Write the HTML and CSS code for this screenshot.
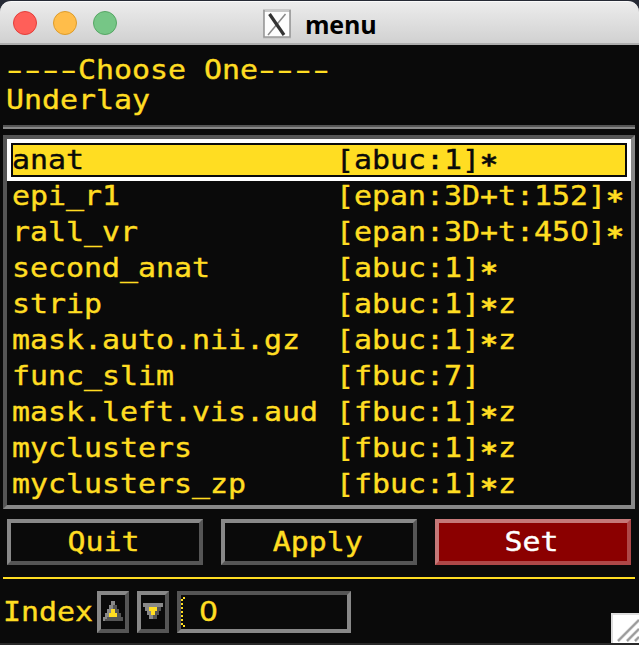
FILE: index.html
```html
<!DOCTYPE html>
<html lang="en">
<head>
<meta charset="utf-8">
<title>menu</title>
<link rel="stylesheet" href="styles.css">
</head>
<body>
<div class="window">
  <header class="titlebar">
    <div class="lights"><i class="light close"></i><i class="light minimize"></i><i class="light zoom"></i></div>
    <div class="title">
      <svg class="xicon" width="28" height="30" viewBox="0 0 28 30">
        <rect x="0" y="0" width="28" height="30" fill="#c9c9c9"/>
        <rect x="1" y="3" width="26" height="25" fill="#fdfdfd"/>
        <path d="M1 1V28H27V1" fill="none" stroke="#999" stroke-width="1.6"/>
        <path d="M22.500 5L5 26" stroke="#888" stroke-width="1.500"/>
        <path d="M6.500 5L21 26" stroke="#333" stroke-width="3.200"/>
      </svg>
      <span>menu</span>
    </div>
  </header>
  <main class="panel">
    <div class="prompt"><div><span class="wide"><span class="dashes">----</span>Choose One<span class="dashes">----</span></span></div><div><span class="wide">Underlay</span></div></div>
    <div class="separator"></div>
    <div class="list">
      <div class="item selected"><span class="wide">anat              [abuc:1]<b class="star">*</b></span></div>
      <div class="item"><span class="wide">epi_r1            [epan:3D+t:152]<b class="star">*</b></span></div>
      <div class="item"><span class="wide">rall_vr           [epan:3D+t:45<span class="zero">0</span>]<b class="star">*</b></span></div>
      <div class="item"><span class="wide">second_anat       [abuc:1]<b class="star">*</b></span></div>
      <div class="item"><span class="wide">strip             [abuc:1]<b class="star">*</b>z</span></div>
      <div class="item"><span class="wide">mask.auto.nii.gz  [abuc:1]<b class="star">*</b>z</span></div>
      <div class="item"><span class="wide">func_slim         [fbuc:7]</span></div>
      <div class="item"><span class="wide">mask.left.vis.aud [fbuc:1]<b class="star">*</b>z</span></div>
      <div class="item"><span class="wide">myclusters        [fbuc:1]<b class="star">*</b>z</span></div>
      <div class="item"><span class="wide">myclusters_zp     [fbuc:1]<b class="star">*</b>z</span></div>
    </div>
    <div class="buttons">
      <div class="button"><span class="wide">Quit</span></div>
      <div class="button"><span class="wide">Apply</span></div>
      <div class="button set"><span class="wide">Set</span></div>
    </div>
    <div class="rule"></div>
    <div class="index">
      <span class="label"><span class="wide">Index</span></span>
      <div class="arrow">
        <svg width="24" height="34" viewBox="0 0 24 34" shape-rendering="crispEdges">
          <path d="M10 6h4v4h2v4h2v4h2v4h2v4H2v-4h2v-4h2v-4h2v-4h2z" fill="#555"/>
          <path d="M10 6h4v4h-2v4h-2v4H8v4H6v2H4v2H2v-4h2v-4h2v-4h2v-4h2z" fill="#888"/>
          <path d="M10 14h4v4h2v4H8v-4h2z" fill="#ffdd22"/>
        </svg>
      </div>
      <div class="arrow">
        <svg width="24" height="34" viewBox="0 0 24 34" shape-rendering="crispEdges">
          <path d="M2 8h20v4h-2v4h-2v4h-2v4H8v-4H6v-4H4v-4H2z" fill="#555"/>
          <path d="M2 8h20v4H8v4h2v4h2v4H8v-4H6v-4H4v-4H2z" fill="#888"/>
          <path d="M8 12h8v4h-2v4h-4v-4H8z" fill="#ffdd22"/>
        </svg>
      </div>
      <div class="field">
        <svg width="4" height="30" viewBox="0 0 4 30" shape-rendering="crispEdges">
          <path d="M2 0h2v2H2zM0 2h2v2H0zM0 6h2v2H0zM0 10h2v2H0zM0 14h2v2H0zM0 18h2v2H0zM0 22h2v2H0zM0 26h2v2H0zM2 28h2v2H2z" fill="#ffdd22"/>
        </svg>
        <span class="wide"><span class="zero">0</span></span>
      </div>
    </div>
  </main>
  <svg class="grip" width="28" height="30" viewBox="0 0 28 30">
    <path d="M0 0H28V30H0z" fill="#ddd"/>
    <path d="M2 2H28V30H2z" fill="#fff"/>
    <path d="M7 28L28 7M16 28L28 16M24 28L28 24" stroke="#ddd" stroke-width="3.500"/>
    <path d="M7 28L28 7M16 28L28 16M24 28L28 24" stroke="#999" stroke-width="1.800"/>
  </svg>
</div>
</body>
</html>
```
FILE: styles.css
```css
* { box-sizing: border-box; }
body { margin: 0; background: #262a35; overflow: hidden; }
.window {
  position: relative;
  width: 639px;
  height: 645px;
  padding-top: 1px;
}
.titlebar {
  position: relative;
  height: 44px;
  padding: 10px 13px;
  background: linear-gradient(#ececec, #d1d1d1);
  border-top: 1px solid #fafafa;
  border-bottom: 2px solid #aeaeae;
  border-radius: 11px 11px 0 0;
}
.lights { display: flex; gap: 16px; margin-top: -1px; }
.light { width: 24px; height: 24px; border-radius: 50%; border: 1px solid; }
.close { background: #ff5f59; border-color: #e33e3a; }
.minimize { background: #ffbd4a; border-color: #dd9c2b; }
.zoom { background: #76c686; border-color: #56a664; }
.title {
  position: absolute;
  left: 263px;
  top: 7px;
  display: flex;
  align-items: center;
  gap: 14px;
  font: bold 25px/30px "Open Sans", sans-serif;
  letter-spacing: -0.200px;
  color: #000;
}
.panel {
  height: 600px;
  padding: 10px 4px 0 3px;
  background: #0a0a0a;
  border-bottom: 2px solid #292929;
  color: #ffdd22;
  font: 27px/30px "DejaVu Sans Mono", monospace;
  -webkit-text-stroke: 0.4px currentColor;
}
/* stretches the 16.255px character cell to 18px */
.wide {
  display: inline-block;
  vertical-align: top;
  transform: scaleX(1.1073);
  transform-origin: 0 50%;
}
.prompt { height: 70px; padding-left: 3px; white-space: pre; }
.dashes {
  display: inline-block;
  width: 65.020px;
  height: 30px;
  vertical-align: top;
  letter-spacing: -6.095px;
  text-indent: -3.300px;
  transform: scaleX(1.6);
  transform-origin: 0 50%;
  -webkit-text-stroke: 0;
}
.separator { height: 4px; border-top: 2px solid #555; border-bottom: 2px solid #888; }
.list {
  height: 374px;
  margin-top: 6px;
  border: 4px solid;
  border-color: #555 #888 #888 #555;
}
.item { height: 36px; padding-left: 5px; line-height: 30px; white-space: pre; }
.selected {
  height: 42px;
  padding-left: 1px;
  border: 4px solid #fff;
  background: #ffdd22;
  box-shadow: inset 0 0 0 2px #0a0a0a;
  color: #0a0a0a;
  line-height: 34px;
}
.star { display: inline-block; height: 30px; vertical-align: top; line-height: 40px; }
.selected .star { line-height: 44px; }
.zero { font-family: "DejaVu Sans", sans-serif; letter-spacing: -0.920px; }
.buttons { display: flex; gap: 18px; padding: 10px 4px 12px; }
.button {
  width: 196px;
  height: 46px;
  border: 4px solid;
  border-color: #888 #555 #555 #888;
  line-height: 37px;
  text-align: center;
}
.button .wide { margin-left: -3px; transform-origin: 50% 50%; }
.set { color: #fff; background: #8b0000; border-color: #c57878 #ae4848 #ae4848 #c57878; }
.rule { height: 2px; background: #ffdd22; }
.index { display: flex; gap: 8px; padding-top: 12px; }
.label { width: 86px; line-height: 41px; white-space: nowrap; }
.arrow { width: 32px; height: 42px; border: 4px solid; border-color: #888 #555 #555 #888; }
.arrow svg { display: block; }
.field {
  display: flex;
  gap: 14px;
  width: 174px;
  height: 42px;
  padding-top: 2px;
  border: 4px solid;
  border-color: #555 #888 #888 #555;
}
.grip { position: absolute; right: 0; bottom: 2px; }
```
